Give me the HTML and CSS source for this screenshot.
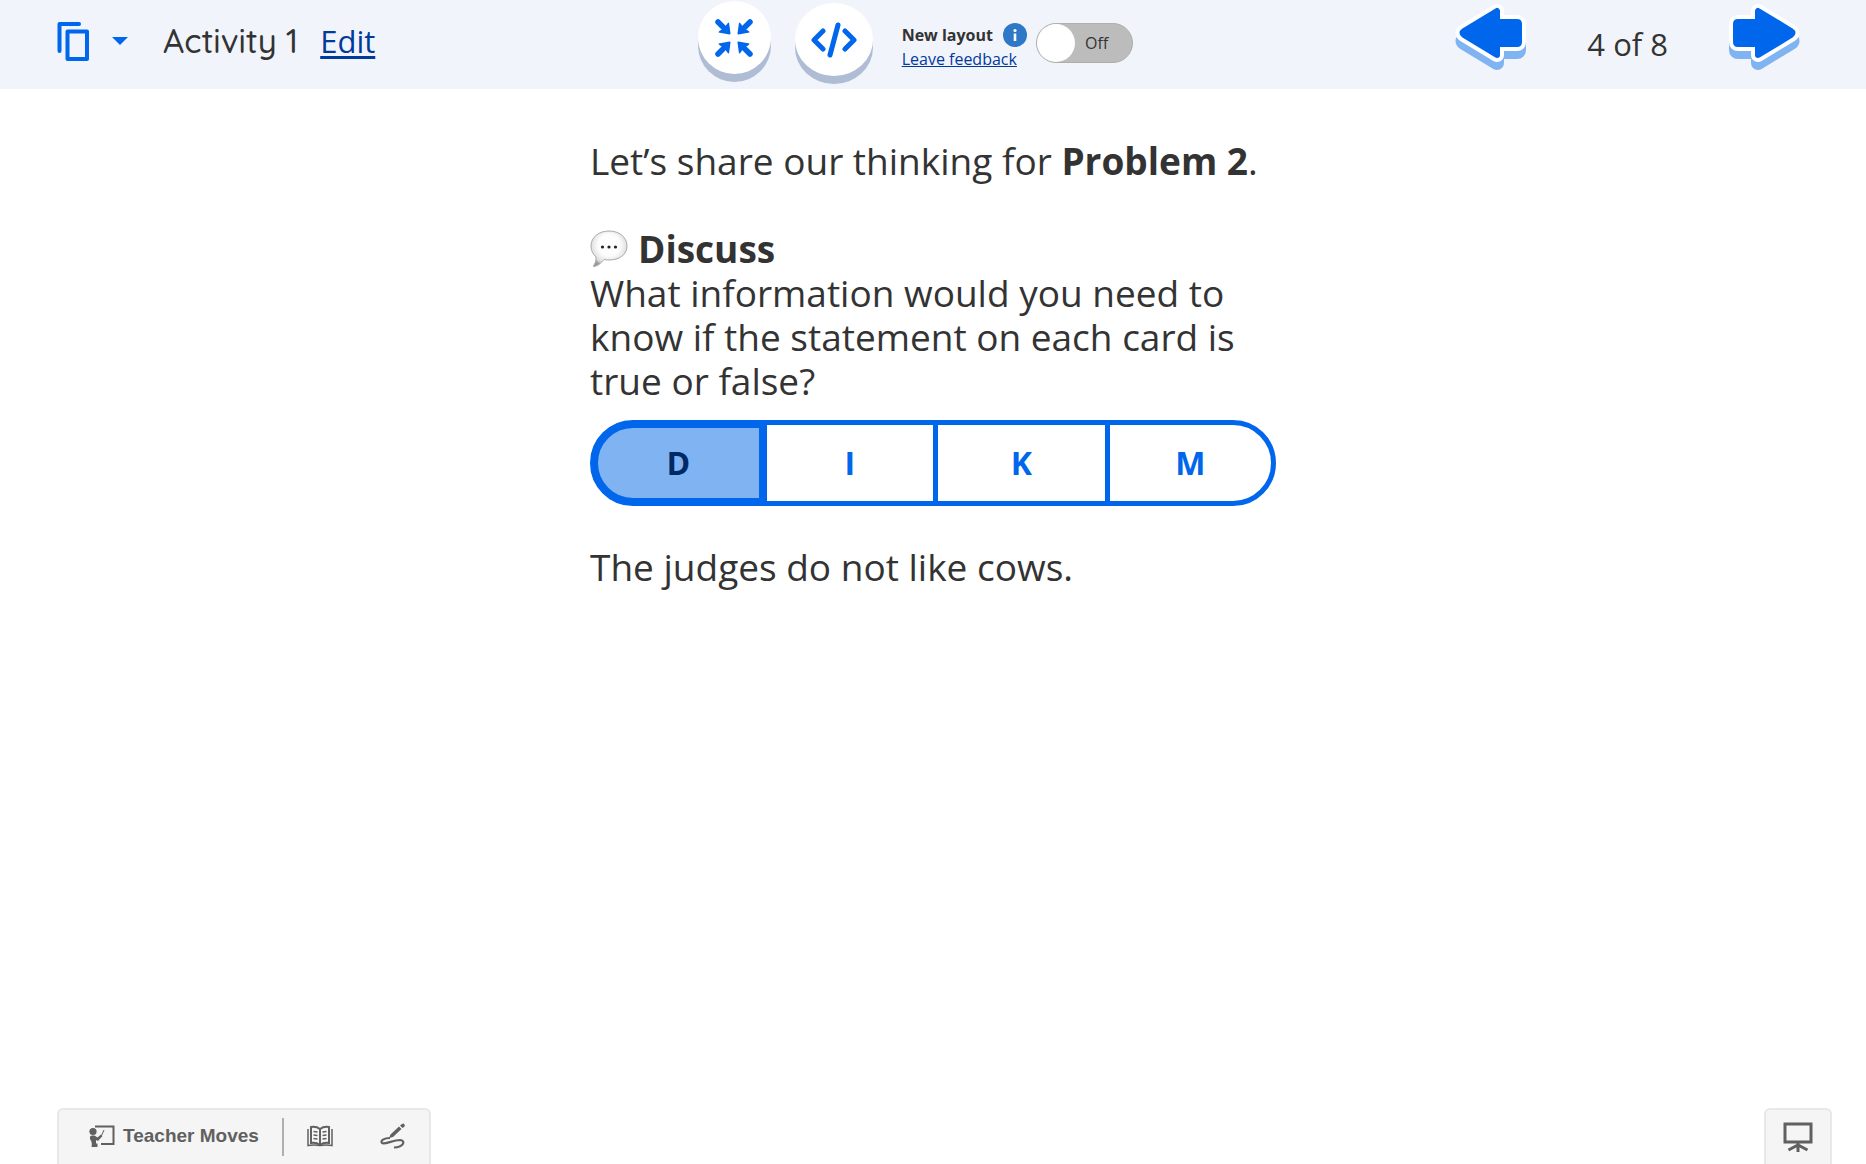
FILE: index.html
```html
<!DOCTYPE html>
<html lang="en">
<head>
  <meta charset="utf-8">
  <meta name="viewport" content="width=device-width, initial-scale=1">
  <title>Activity 1</title>
  <link rel="stylesheet" href="styles.css">
</head>

<body>
  <header class="topbar">
    <div class="topbar-left">
      <button type="button" class="copy-btn" aria-label="Copy activity">
        <svg width="32" height="40" viewBox="0 0 32 40" fill="none" stroke="#0066eb" stroke-linejoin="round" stroke-linecap="round">
          <path d="M2.500 30V3H22" stroke-width="4" />
          <rect x="10.500" y="10.500" width="19.500" height="27.500" stroke-width="4" />
        </svg>
        <svg width="16" height="8" viewBox="0 0 16 8"><path d="M0 0H16L8 8Z" fill="#0066eb" /></svg>
      </button>
      <h1 class="activity-title">Activity 1</h1>
      <a class="edit-link" href="#">Edit</a>
    </div>

    <div class="topbar-center">
      <button type="button" class="round-btn" aria-label="Exit full screen">
        <svg width="40" height="40" viewBox="0 0 40 40" fill="#0066eb">
          <g id="shrink">
            <path d="M4 4L11 11" stroke="#0066eb" stroke-width="5.5" stroke-linecap="round" />
            <path d="M15 4.5L16.5 15.5Q16.5 16.6 15.5 16.5L4.5 14.5Q4.5 13.5 6 12.5L9 11L11 9L13 6Q14 4.5 15 4.5Z" />
          </g>
          <use href="#shrink" transform="matrix(-1 0 0 1 40 0)" />
          <use href="#shrink" transform="matrix(1 0 0 -1 0 40)" />
          <use href="#shrink" transform="matrix(-1 0 0 -1 40 40)" />
        </svg>
      </button>
      <button type="button" class="round-btn wide" aria-label="View code">
        <svg width="46" height="36" viewBox="0 0 46 36" fill="none" stroke="#0066eb" stroke-width="5" stroke-linecap="round" stroke-linejoin="round">
          <path d="M12 9L3 18L12 27M34 9L43 18L34 27M27 3L19 33" />
        </svg>
      </button>
      <div class="layout-info">
        <div class="layout-name">
          <span id="layout-label">New layout</span>
          <svg width="24" height="24" viewBox="0 0 24 24">
            <circle cx="12" cy="12" r="12" fill="#2f78c8" />
            <circle cx="12" cy="7.5" r="1.6" fill="#fff" />
            <path d="M12 10.5V18" stroke="#fff" stroke-width="2.6" />
          </svg>
        </div>
        <a href="#">Leave feedback</a>
      </div>
      <label class="toggle">
        <input type="checkbox" role="switch" aria-labelledby="layout-label">
        <span class="toggle-text">Off</span>
      </label>
    </div>

    <nav class="topbar-right" aria-label="Screens">
      <button type="button" class="arrow-btn" aria-label="Previous screen">
        <svg width="71" height="66" viewBox="0 0 71 66" stroke-linejoin="round">
          <g id="arrow-left">
            <path d="M42 7V18H62Q64 18 64 20V38Q64 40 62 40H42V51L9 31Q6 29 9 27Z" fill="#80b3f1" stroke="#80b3f1" stroke-width="14" transform="translate(0 8)" />
            <path d="M42 7V18H62Q64 18 64 20V38Q64 40 62 40H42V51L9 31Q6 29 9 27Z" fill="#fff" stroke="#fff" stroke-width="14" />
            <path d="M42 7V18H62Q64 18 64 20V38Q64 40 62 40H42V51L9 31Q6 29 9 27Z" fill="#0066eb" stroke="#0066eb" stroke-width="6" />
          </g>
        </svg>
      </button>
      <span class="screen-count">4 of 8</span>
      <button type="button" class="arrow-btn" aria-label="Next screen">
        <svg width="71" height="66" viewBox="0 0 71 66" stroke-linejoin="round">
          <use href="#arrow-left" transform="matrix(-1 0 0 1 71 0)" />
        </svg>
      </button>
    </nav>
  </header>

  <main class="screen">
    <p>Let’s share our thinking for <strong>Problem 2</strong>.</p>
    <h2 class="discuss">
      <svg width="38" height="38" viewBox="0 0 38 38">
        <defs><radialGradient id="bubble" cx="50%" cy="40%" r="60%"><stop offset="0.5" stop-color="#fdfdfd" /><stop offset="0.85" stop-color="#dedede" /><stop offset="1" stop-color="#999" /></radialGradient></defs>
        <path d="M19 1C29 1 37 7 37 16C37 25 29 30 19 30C17 30 16 30 14 29.5C11 33 8 36 4 36.5C3 36.5 3 36 4 35C6 32 6 30 6 27C3 24 1 21 1 16C1 7 9 1 19 1Z" fill="url(#bubble)" stroke="#aaa" />
        <g fill="#222"><circle cx="12.5" cy="17" r="1.6" /><circle cx="19" cy="17" r="1.6" /><circle cx="25.5" cy="17" r="1.6" /></g>
      </svg>
      <span>Discuss</span>
    </h2>
    <p>What information would you need to know if the statement on each card is true or false?</p>

    <div class="choices" role="group" aria-label="Cards">
      <button type="button" class="choice selected" aria-pressed="true">D</button>
      <button type="button" class="choice" aria-pressed="false">I</button>
      <button type="button" class="choice" aria-pressed="false">K</button>
      <button type="button" class="choice" aria-pressed="false">M</button>
    </div>

    <p>The judges do not like cows.</p>
  </main>

  <footer class="bottombar">
    <div class="tools">
      <button type="button" class="tool">
        <svg width="26" height="22" viewBox="0 0 26 22" fill="#606060">
          <path d="M6 1.5H24.5V19H12" fill="none" stroke="#606060" stroke-width="2" />
          <circle cx="4" cy="6.5" r="3.6" />
          <path d="M1 12Q1 10.5 3 10.5H5.500L8.500 12.500L12 9.500L13.500 11L9 16L7 15V18.500H8.500V22H2.500Q3.500 17 1 14Z" />
          <path d="M12.500 10.500L15 5" stroke="#606060" />
        </svg>
        <span>Teacher Moves</span>
      </button>
      <span class="divider"></span>
      <button type="button" class="tool" aria-label="Glossary">
        <svg width="26" height="22" viewBox="0 0 26 22" fill="none" stroke="#606060" stroke-width="2">
          <path d="M13 4Q9 1 4 2V18Q9 17 13 20Q17 17 22 18V2Q17 1 13 4V19" />
          <path d="M1 4V20.500Q7 19.500 13 20.500Q19 19.500 25 20.500V4" stroke-width="1.500" />
          <path d="M6.500 6.500L10.500 7M6.500 10L10.500 10.500M6.500 13.500L10.500 14M15.500 7L19.500 6.500M15.500 10.500L19.500 10M15.500 14L19.500 13.500" stroke-width="1.500" />
        </svg>
      </button>
      <button type="button" class="tool" aria-label="Sketch">
        <svg width="26" height="26" viewBox="0 0 26 26" fill="#606060">
          <path d="M9 15L10.500 11.500L19 3.500L21.500 6L13 14Z M20 2.500L22 1Q23.500 0 24.500 1.500Q25.500 3 24 4L22.500 5Z" />
          <path d="M10 15C4 15 0 17.500 2 20C4 22 13 17 20 17C26 17.500 24 24 14 24.500" fill="none" stroke="#606060" stroke-width="2.200" />
        </svg>
      </button>
    </div>
    <button type="button" class="present-btn" aria-label="Present">
      <svg width="30" height="30" viewBox="0 0 30 30" fill="none" stroke="#606060" stroke-width="3">
        <path d="M2 2H28V20H2ZM15 20V30M5.500 28L15 23L24.500 28" />
      </svg>
    </button>
  </footer>
</body>
</html>
```
FILE: styles.css
```css
* {
  box-sizing: border-box;
}

body {
  display: flex;
  flex-direction: column;
  min-height: 100vh;
  margin: 0;
  background: #fff;
  color: #333;
  font-family: "Open Sans", "Noto Sans", sans-serif;
}

button {
  padding: 0;
  border: 0;
  background: none;
  color: inherit;
  font: inherit;
  cursor: pointer;
}

svg {
  display: block;
  flex-shrink: 0;
}

a {
  color: #003a9b;
}

/* top bar */
.topbar {
  display: flex;
  align-items: center;
  justify-content: space-between;
  height: 89px;
  padding: 0 66px 0 57px;
  background: #f1f4fb;
  font-size: 31px;
  line-height: 40px;
}

.topbar-left,
.topbar-center,
.topbar-right,
.copy-btn {
  display: flex;
  align-items: center;
}

.topbar-left {
  padding-bottom: 8px;
}

.copy-btn {
  gap: 23px;
  margin-right: 35px;
}

.activity-title {
  margin: 0 22px 0 0;
  font-family: Quicksand, Lato, sans-serif;
  font-size: 33px;
  font-weight: 500;
}

.edit-link {
  text-underline-offset: 3px;
}

.round-btn {
  display: flex;
  align-items: center;
  justify-content: center;
  width: 73px;
  height: 73px;
  margin: 0 24px 14px 0;
  border-radius: 50%;
  background: #fff;
  box-shadow: 0 8px 0 #aebdd4;
}

.round-btn.wide {
  width: 78px;
  margin-right: 29px;
  margin-bottom: 10px;
}

.layout-info {
  margin-right: 9px;
  padding-top: 4px;
  font-size: 16px;
  line-height: 24px;
}

.layout-name {
  display: flex;
  gap: 10px;
  font-weight: bold;
}

.toggle {
  display: grid;
  align-items: center;
  padding-bottom: 3px;
  font-size: 16px;
}

.toggle input,
.toggle-text {
  grid-area: 1 / 1;
}

.toggle input {
  appearance: none;
  display: flex;
  width: 97px;
  height: 40px;
  margin: 0;
  border: 1px solid #aeaeae;
  border-radius: 20px;
  background: #bcbcbc;
}

.toggle input::before {
  content: "";
  width: 38px;
  height: 38px;
  border-radius: 50%;
  background: #fff;
}

.toggle input:checked {
  justify-content: flex-end;
}

.toggle-text {
  padding-left: 49px;
}

.topbar-right {
  gap: 61px;
}

.screen-count {
  padding-bottom: 2px;
}

.arrow-btn {
  padding-bottom: 15px;
}

/* screen content */
.screen {
  flex: 1;
  width: 100%;
  max-width: 686px;
  margin: 0 auto;
  padding-top: 50px;
  font-size: 37px;
  line-height: 44px;
}

.screen p {
  margin: 0;
}

.discuss {
  display: flex;
  align-items: center;
  gap: 10px;
  margin: 44px 0 0;
  font-size: inherit;
}

.choices {
  display: flex;
  margin: 17px 0 39px;
}

.choice {
  flex: 0 0 calc(25% + 5px);
  height: 86px;
  border: 5px solid #0066eb;
  color: #0066eb;
  font-size: 32px;
  font-weight: bold;
}

.choice + .choice {
  margin-left: -5px;
}

.choice:first-child {
  border-radius: 43px 0 0 43px;
}

.choice:last-child {
  flex: 1;
  border-radius: 0 43px 43px 0;
}

.choice.selected {
  z-index: 1;
  border-width: 8px;
  background: #80b3f1;
  color: #002a66;
}

/* bottom bar */
.bottombar {
  display: flex;
  justify-content: space-between;
  height: 56px;
  padding: 0 34px 0 57px;
  color: #606060;
  font: bold 19px "Liberation Sans", Arial, sans-serif;
}

.tools,
.present-btn {
  display: flex;
  align-items: center;
  border: 2px solid #e8e8e8;
  border-bottom: 0;
  border-radius: 6px 6px 0 0;
  background: #f5f5f5;
}

.tools {
  gap: 23px;
  padding: 0 23px 0 30px;
}

.tool {
  display: flex;
  align-items: center;
  gap: 8px;
  padding-bottom: 2px;
}

.tool + .tool {
  margin-left: 24px;
}

.divider {
  width: 2px;
  height: 38px;
  background: #b0b0b0;
}

.present-btn {
  justify-content: center;
  width: 68px;
}
```
